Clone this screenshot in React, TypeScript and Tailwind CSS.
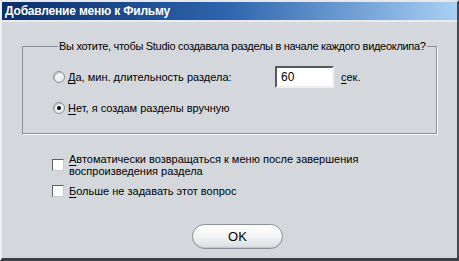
import React from 'react';

const font = { fontFamily: '"Liberation Sans", Arial, sans-serif' };

function Radio({ checked }: { checked?: boolean }) {
  return (
    <span className="relative inline-flex h-[12px] w-[12px] shrink-0 items-center justify-center rounded-full border border-[#8a8f95] bg-gradient-to-br from-white to-[#e4e6e9] shadow-[inset_1px_1px_1px_rgba(0,0,0,0.25)]">
      {checked && <span className="h-[4px] w-[4px] rounded-full bg-black" />}
    </span>
  );
}

function Check() {
  return (
    <span className="inline-block h-[12px] w-[12px] shrink-0 border border-t-[#5d6166] border-l-[#5d6166] border-r-[#c9ccd0] border-b-[#c9ccd0] bg-white" />
  );
}

// подчёркнутая буква-акселератор
function U({ children }: { children: React.ReactNode }) {
  return <span className="underline underline-offset-[2px]">{children}</span>;
}

export default function App() {
  return (
    <div
      className="flex h-[261px] w-[459px] flex-col overflow-hidden border-l-2 border-t-2 border-r-2 border-b-[3px] border-l-[#eef0f2] border-t-[#e6e8eb] border-r-[#44484d] border-b-[#3b3e42] bg-[#d4d8dd] text-[11px] text-black"
      style={font}
    >
      {/* заголовок */}
      <div className="flex h-[18px] shrink-0 items-center bg-gradient-to-r from-[#0a2d6a] via-[#2f66ae] to-[#a9d0f4] pl-[3px]">
        <span className="text-[12px] font-bold tracking-[-0.2px] text-white">Добавление меню к Фильму</span>
      </div>
      <div className="h-[2px] shrink-0 bg-[#e9ebee]" />

      {/* группа с вопросом */}
      <fieldset className="ml-[20px] mt-[17px] w-[415px] shrink-0 border border-[#8d9197] pb-[18px] pl-[30px] pt-[13px] shadow-[1px_1px_0_#ffffff]">
        <legend className="ml-[5px] whitespace-nowrap px-[1px] leading-[14px] tracking-[-0.3px]">
          Вы хотите, чтобы Studio создавала разделы в начале каждого видеоклипа?
        </legend>
        <div className="flex h-[22px] items-center">
          <Radio />
          <span className="ml-[3px] w-[207px]">
            <U>Д</U>а, мин. длительность раздела:
          </span>
          <div className="flex h-[22px] w-[59px] items-center border-2 border-t-[#55595e] border-l-[#55595e] border-r-[#eef0f2] border-b-[#eef0f2] bg-white pl-[4px] text-[12px]">
            60
          </div>
          <span className="ml-[7px]">
            <U>с</U>ек.
          </span>
        </div>
        <div className="mt-[13px] flex h-[14px] items-center">
          <Radio checked />
          <span className="ml-[3px]">
            <U>Н</U>ет, я создам разделы вручную
          </span>
        </div>
      </fieldset>

      {/* флажки */}
      <div className="ml-[50px] mt-[19px] flex shrink-0 items-center">
        <Check />
        <span className="ml-[5px] leading-[12px]">
          <U>А</U>втоматически возвращаться к меню после завершения
          <br />
          воспроизведения раздела
        </span>
      </div>
      <div className="ml-[50px] mt-[7px] flex shrink-0 items-center">
        <Check />
        <span className="ml-[5px] leading-[14px]">
          <U>Б</U>ольше не задавать этот вопрос
        </span>
      </div>

      {/* кнопка */}
      <div className="mt-[26px] flex shrink-0 pl-[190px]">
        <button className="flex h-[25px] w-[91px] items-center justify-center rounded-full border border-[#8b9096] bg-gradient-to-b from-white via-[#f3f4f5] to-[#d9dce0] text-[13px] shadow-[inset_0_-1px_1px_rgba(0,0,0,0.1)]">
          OK
        </button>
      </div>
    </div>
  );
}
